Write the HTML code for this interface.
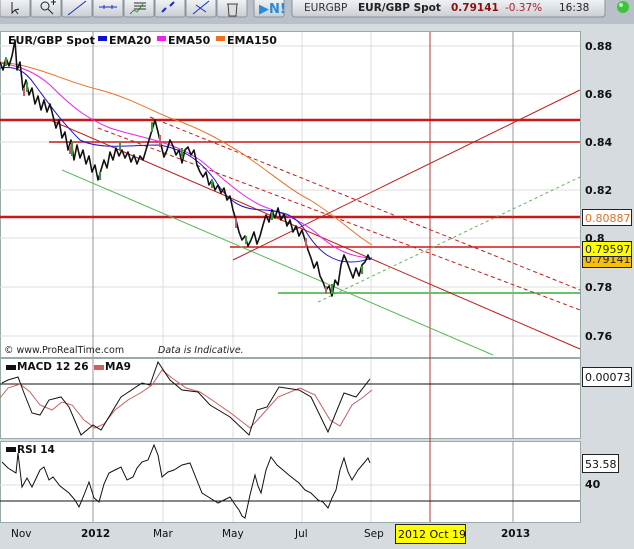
<!DOCTYPE html>
<html><head><meta charset="utf-8"><style>
body{margin:0;width:634px;height:544px;overflow:hidden;background:#d6dbe0;font-family:"Liberation Sans",sans-serif}
svg text{font-family:"DejaVu Sans","Liberation Sans",sans-serif}
</style></head><body>
<svg width="634" height="544" xmlns="http://www.w3.org/2000/svg">
<defs><linearGradient id="bt" x1="0" y1="0" x2="0" y2="1"><stop offset="0" stop-color="#f4f6f8"/><stop offset="1" stop-color="#c9ced4"/></linearGradient></defs>
<rect x="0" y="0" width="634" height="544" fill="#d6dbe0"/>
<rect x="0" y="0" width="634" height="24" fill="#b9c0c8"/>
<g stroke="#8a929a" fill="url(#bt)">
<rect x="0" y="-2" width="30" height="19" rx="2"/><rect x="31" y="-2" width="30" height="19" rx="2"/><rect x="62" y="-2" width="30" height="19" rx="2"/><rect x="93" y="-2" width="30" height="19" rx="2"/><rect x="124" y="-2" width="30" height="19" rx="2"/><rect x="155" y="-2" width="30" height="19" rx="2"/><rect x="186" y="-2" width="30" height="19" rx="2"/><rect x="217" y="-2" width="30" height="19" rx="2"/>
<rect x="254" y="-2" width="30" height="19" rx="2"/><rect x="292" y="-2" width="313" height="19" rx="3"/>
</g>
<g stroke="#222" fill="none" stroke-width="1">
<path d="M12 2 L12 13 L15 10 L18 14 M15 10 L19 9 Z"/>
<circle cx="45" cy="6" r="4"/><path d="M48 9 L53 14"/><path d="M51 2h5M53.5 0v5"/>
</g>
<path d="M68 15 L86 1" stroke="#1530c0"/><path d="M99 7h18M104 5v4M112 5v4" stroke="#1530c0"/>
<path d="M130 14 l4-4 l3 2 l6-8" stroke="#2a9a2a" fill="none"/><path d="M134 3h12M134 6h12M134 9h12" stroke="#333"/>
<path d="M162 12 l4-4 M170 6 l4-4" stroke="#1530c0" stroke-width="2"/><path d="M193 14 L209 1 M196 5 l10 7" stroke="#1530c0"/>
<path d="M227 4h11M228 4 l1 12h7l1-12" stroke="#444" fill="#ddd"/>
<text x="259" y="13" font-size="13" font-weight="bold" fill="#2a8ad8">▶N!</text>
<text x="304" y="11" font-size="10.5" fill="#333">EURGBP</text>
<text x="358" y="11" font-size="10.5" font-weight="bold" fill="#222">EUR/GBP Spot</text>
<text x="451" y="11" font-size="10.5" font-weight="bold" fill="#8a1010">0.79141</text>
<text x="505" y="11" font-size="10.5" fill="#b02020">-0.37%</text>
<text x="559" y="11" font-size="10.5" fill="#222">16:38</text>
<circle cx="623" cy="7" r="6" fill="#3cc43c"/><circle cx="621" cy="5" r="2" fill="#b8f0b8"/>

<rect x="0.5" y="31.5" width="580" height="326" fill="#fff" stroke="#9aa"/>
<rect x="0.5" y="358.5" width="580" height="80" fill="#fff" stroke="#9aa"/>
<rect x="0.5" y="441.5" width="580" height="81" fill="#fff" stroke="#9aa"/>
<g stroke="#dcdcdc">
<path d="M0 46H580M0 94H580M0 142H580M0 190H580M0 238H580M0 287H580M0 336H580"/>
<path d="M163 32V357M233 32V357M302 32V357M371 32V357M163 359V438M233 359V438M302 359V438M371 359V438M163 442V522M233 442V522M302 442V522M371 442V522M0 485H580"/>
</g>
<g stroke="#999"><path d="M93 32V357M513 32V357M93 359V438M513 359V438M93 442V522M513 442V522"/></g>
<path d="M430 32V522" stroke="#c03030"/>

<g fill="none">
<path d="M0 120H580" stroke="#c81818" stroke-width="2.5"/>
<path d="M49 142H580" stroke="#c81818" stroke-width="1.5"/>
<path d="M0 217H580" stroke="#c81818" stroke-width="2.5"/>
<path d="M230 247H580" stroke="#d01818" stroke-width="1.5"/>
<path d="M278 293H580" stroke="#6cc06c" stroke-width="2"/>
<path d="M50 120 L580 349" stroke="#c81818"/>
<path d="M98 128 L580 310" stroke="#c81818" stroke-dasharray="4,3"/>
<path d="M150 117 L580 290" stroke="#c81818" stroke-dasharray="4,3"/>
<path d="M62 170 L493 355" stroke="#5cb85c"/>
<path d="M233 260 L580 90" stroke="#c81818"/>
<path d="M318 302 L580 177" stroke="#5cb85c" stroke-dasharray="3,3"/>
<path d="M0 62 C40 66 60 80 100 90 C130 98 150 110 170 118 C200 128 220 140 240 152 C270 172 290 190 310 200 C335 215 355 235 372 245" stroke="#f07020"/>
<path d="M0 63 C20 66 35 72 50 85 C70 105 85 118 110 128 C140 138 170 140 200 160 C225 180 240 195 260 205 C285 215 300 220 315 232 C335 250 350 257 372 258" stroke="#ee22ee"/>
<path d="M0 68 C15 66 25 70 35 85 C50 105 60 120 80 140 C100 150 130 145 160 145 C185 150 200 160 215 180 C230 205 245 210 265 210 C285 212 295 215 305 230 C320 255 335 262 350 262 C360 262 365 260 372 258" stroke="#1818d0"/>
<polyline stroke="#111" stroke-width="1.6" stroke-linejoin="round" points="0,62 3,70 6,58 9,66 12,56 15,40 17,70 20,62 23,90 26,80 29,95 32,88 35,104 38,96 41,110 44,100 47,112 50,104 53,116 56,128 59,120 62,138 65,132 68,150 71,140 74,160 77,145 80,158 83,150 86,164 89,156 92,172 95,165 98,180 101,170 104,160 107,168 110,152 113,160 116,148 119,156 122,150 125,158 128,152 131,162 134,155 137,164 140,156 143,160 146,150 149,140 152,130 155,120 158,132 161,145 164,157 167,150 170,140 173,146 176,155 179,150 182,163 185,150 188,147 191,155 194,150 197,165 200,172 203,177 206,172 209,185 212,180 215,190 218,185 221,193 224,188 227,200 230,196 233,210 236,220 239,232 242,240 245,236 248,246 251,240 254,232 257,244 260,236 263,225 266,215 269,222 272,210 275,218 278,208 281,220 284,214 287,226 290,220 293,232 296,226 299,236 302,230 305,240 308,250 311,258 314,268 317,262 320,276 323,282 326,290 329,286 332,296 335,280 338,285 341,265 344,255 347,262 350,270 353,278 356,268 359,276 362,265 365,262 368,255 370,260"/>
<path d="M6 58v8 M27 82v10 M72 142v14 M120 150v-8 M152 132v-10 M182 148v10 M246 236v8 M272 212v8 M332 284v10 M362 266v8 M100 172v8 M212 180v8" stroke="#3a9a3a" stroke-width="2"/>
<path d="M24 88v8 M70 146v8 M160 135v12 M236 218v10 M306 238v10 M326 286v8" stroke="#c06060" stroke-width="2"/>
</g>
<text x="8" y="44" font-size="11" font-weight="bold" fill="#111">EUR/GBP Spot</text>
<rect x="98" y="36" width="9" height="5" fill="#1010d0"/><text x="109" y="44" font-size="11" font-weight="bold" fill="#111">EMA20</text>
<rect x="157" y="36" width="9" height="5" fill="#ee22ee"/><text x="168" y="44" font-size="11" font-weight="bold" fill="#111">EMA50</text>
<rect x="216" y="36" width="9" height="5" fill="#f07020"/><text x="227" y="44" font-size="11" font-weight="bold" fill="#111">EMA150</text>
<text x="4" y="353" font-size="9.5" fill="#222">©  www.ProRealTime.com</text>
<text x="158" y="353" font-size="9.5" font-style="italic" fill="#222">Data is Indicative.</text>

<path d="M0 384H580" stroke="#111"/>
<polyline fill="none" stroke="#c86060" points="0,398 8,388 20,384 30,392 40,405 52,410 62,402 72,405 84,420 95,428 104,424 115,410 128,400 142,392 152,385 162,370 172,378 186,388 200,392 212,400 232,414 250,428 262,415 278,397 300,388 315,395 330,420 340,426 352,405 362,398 372,390"/>
<polyline fill="none" stroke="#111" points="2,383 8,380 18,377 24,393 32,413 40,415 49,400 61,397 69,407 81,435 93,425 101,430 121,397 142,383 150,385 158,362 170,380 182,390 198,392 210,405 230,417 249,435 257,410 267,407 279,387 299,390 311,397 328,432 344,393 356,397 370,379"/>
<rect x="6" y="365" width="10" height="5" fill="#111"/><text x="17" y="370" font-size="10.5" font-weight="bold" fill="#111">MACD 12 26</text>
<rect x="94" y="365" width="10" height="5" fill="#d06060"/><text x="105" y="370" font-size="10.5" font-weight="bold" fill="#111">MA9</text>
<path d="M0 501H580" stroke="#111"/>
<polyline fill="none" stroke="#111" points="2,462 8,468 16,473 18,453 22,487 27,478 32,487 40,470 44,467 49,480 53,477 60,486 69,493 75,500 79,507 84,495 89,482 94,498 99,502 104,484 109,473 115,470 121,467 127,480 133,477 137,468 142,462 148,460 154,445 158,455 162,477 168,472 174,470 182,465 190,463 196,478 202,493 210,498 218,503 224,500 230,497 236,506 239,510 242,516 245,518 250,495 255,475 258,486 261,493 266,470 271,457 277,465 283,470 290,476 299,483 305,490 311,493 318,500 323,502 328,508 332,498 336,490 340,470 344,458 348,472 352,480 358,470 364,463 368,458 370,463"/>
<rect x="6" y="447" width="10" height="5" fill="#111"/><text x="17" y="453" font-size="10.5" font-weight="bold" fill="#111">RSI 14</text>

<g font-size="11" font-weight="bold" fill="#111">
<text x="585" y="50">0.88</text><text x="585" y="98">0.86</text><text x="585" y="146">0.84</text><text x="585" y="194">0.82</text><text x="585" y="242">0.8</text><text x="585" y="291">0.78</text><text x="585" y="340">0.76</text><text x="585" y="488">40</text>
</g>
<rect x="582.5" y="250.5" width="49" height="17" fill="#f8c000" stroke="#222"/><text x="585" y="263" font-size="11" fill="#222">0.79141</text>
<rect x="582.5" y="241.5" width="49" height="15" fill="#ffff00" stroke="#222"/><text x="585" y="253" font-size="11" fill="#222">0.79597</text>
<rect x="582.5" y="209.5" width="49" height="16" fill="#fff" stroke="#222"/><text x="585" y="222" font-size="11" fill="#e07020">0.80887</text>
<rect x="582.5" y="367.5" width="49" height="19" fill="#fff" stroke="#222"/><text x="585" y="381" font-size="11" fill="#111">0.00073</text>
<rect x="582.5" y="454.5" width="36" height="18" fill="#fff" stroke="#222"/><text x="585" y="468" font-size="11" fill="#111">53.58</text>

<g font-size="10.5" fill="#111">
<text x="11" y="537">Nov</text><text x="81" y="537" font-weight="bold">2012</text><text x="153" y="537">Mar</text><text x="222" y="537">May</text><text x="295" y="537">Jul</text><text x="364" y="537">Sep</text><text x="501" y="537" font-weight="bold">2013</text>
</g>
<rect x="395.5" y="524.5" width="70" height="19" fill="#ffff00" stroke="#222"/><text x="398" y="538" font-size="11" fill="#111">2012 Oct 19</text>
</svg>
</body></html>
